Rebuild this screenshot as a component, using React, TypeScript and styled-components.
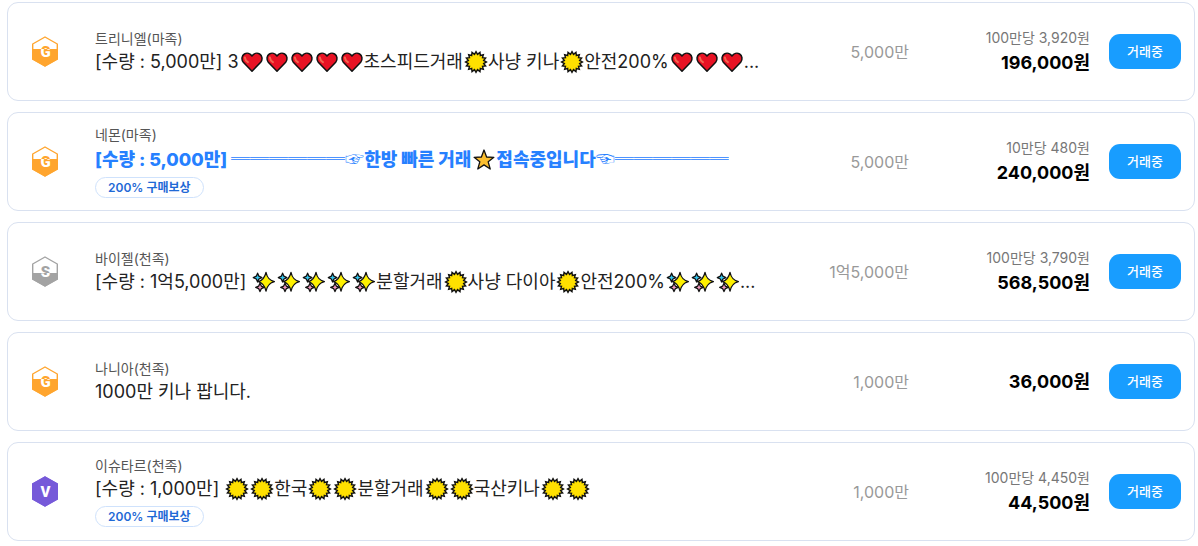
import React from "react";
import styled, { createGlobalStyle } from "styled-components";

const GlobalStyle = createGlobalStyle`
  *, *::before, *::after { box-sizing: border-box; }
  body {
    margin: 0;
    background: #fff;
    color: #222;
    font-family: Inter, "Noto Sans CJK KR", sans-serif;
  }
`;

const List = styled.ul`
  list-style: none;
  margin: 0;
  padding: 2px 3px 5px 7px;
  display: flex;
  flex-direction: column;
  gap: 11px;
`;

const Card = styled.li`
  display: flex;
  align-items: center;
  min-height: 99px;
  padding: 0 13px 0 24px;
  border: 1px solid #d9e1f0;
  border-radius: 11px;
  background: #fff;
`;

const GradeIcon = styled.svg`
  flex: none;
  width: 26px;
  height: 31px;
  margin-right: 37px;
`;

const Info = styled.div`
  flex: 1;
  min-width: 0;
  display: flex;
  flex-direction: column;
  align-items: flex-start;
`;

const Server = styled.span`
  font-size: 14px;
  line-height: 20px;
  color: #555;
`;

const Title = styled.a<{ $premium?: boolean }>`
  max-width: 100%;
  margin: -2px 0;
  padding: 2px 0;
  overflow: hidden;
  white-space: nowrap;
  text-overflow: ellipsis;
  text-decoration: none;
  font-size: 18px;
  line-height: 26px;
  font-weight: ${(p) => (p.$premium ? 800 : 400)};
  color: ${(p) => (p.$premium ? "#2680ff" : "#222")};
`;

const Rule = styled.span`
  font-family: "Noto Sans CJK KR", sans-serif;
  font-size: 19px;
  font-weight: 400;
`;

const EmojiSvg = styled.svg`
  display: inline-block;
  width: 25px;
  height: 24px;
  vertical-align: -6px;
`;

const Reward = styled.span`
  margin-top: 4px;
  padding: 0 12px;
  border: 1px solid #cfe2fc;
  border-radius: 11px;
  font-size: 12px;
  line-height: 19px;
  font-weight: 600;
  color: #1f69d6;
`;

const Quantity = styled.span`
  flex: none;
  width: 120px;
  text-align: right;
  font-size: 16px;
  line-height: 24px;
  color: #999;
`;

const Price = styled.div`
  flex: none;
  width: 181px;
  display: flex;
  flex-direction: column;
  align-items: flex-end;
`;

const UnitPrice = styled.span`
  font-size: 14px;
  line-height: 22px;
  color: #777;
`;

const Total = styled.strong`
  font-size: 18px;
  line-height: 28px;
  font-weight: 700;
  color: #000;
`;

const TradeButton = styled.button`
  flex: none;
  width: 72px;
  height: 35px;
  margin-left: 19px;
  padding: 0 0 2px;
  border: 0;
  border-radius: 11px;
  background: #189dff;
  color: #fff;
  font-family: inherit;
  font-size: 13px;
  font-weight: 500;
  cursor: pointer;
`;

const SUN_POINTS = Array.from({ length: 32 }, (_, i) => {
  const angle = (i * Math.PI) / 16;
  const r = i % 2 ? 7.8 : 10.4;
  return `${(13 + r * Math.sin(angle)).toFixed(2)},${(12 - r * Math.cos(angle)).toFixed(2)}`;
}).join(" ");

const EMOJI: Record<string, { label: string; art: React.ReactNode }> = {
  "♥": {
    label: "하트",
    art: (
      <>
        <path
          d="M13 21.2 4.3 12.2C2.1 9.6 2.8 5.6 5.4 4c2.6-1.5 5.8-.7 7.6 2 1.8-2.7 5-3.5 7.6-2 2.6 1.6 3.3 5.6 1.1 8.2Z"
          fill="#e81224"
          stroke="#111"
          strokeWidth="1.5"
          strokeLinejoin="round"
        />
        <path d="M5.9 7.6c.2 2 1.5 3.5 3 4.5" fill="none" stroke="#f4664f" strokeWidth="2" strokeLinecap="round" />
      </>
    ),
  },
  "☀": {
    label: "해",
    art: <polygon points={SUN_POINTS} fill="#ffe000" stroke="#111" strokeWidth="1.4" />,
  },
  "★": {
    label: "별",
    art: (
      <path
        d="m13 2 2.600 7 7.300.3-5.700 4.500 2 7.200-6.200-4.100-6.200 4.100 2-7.200-5.700-4.500 7.300-.3Z"
        fill="#fcbf30"
        stroke="#111"
        strokeWidth="1.3"
        strokeLinejoin="round"
      />
    ),
  },
  "✨": {
    label: "반짝임",
    art: (
      <g stroke="#111" strokeWidth="1.3" strokeLinejoin="round">
        <path d="m6.6 3.2 1.3 3 3 1.4-3 1.4-1.3 3-1.3-3-3-1.4 3-1.4Z" fill="#35c5ee" />
        <path d="m9 13.2 1.3 2.9 3 1.3-3 1.3L9 21.6l-1.3-2.9-3-1.3 3-1.3Z" fill="#f49ac1" />
        <path d="M15 2.4c1.200 5.200 3 7.800 8.400 9.300-5.400 1.500-7.200 4.100-8.400 9.300-1.200-5.200-3-7.800-7.400-9.300C12 10.200 13.800 7.600 15 2.400Z" fill="#fff100" />
      </g>
    ),
  },
};

function Emoji({ char }: { char: string }) {
  const { label, art } = EMOJI[char];
  return (
    <EmojiSvg viewBox="0 0 25 24" role="img" aria-label={label}>
      {art}
    </EmojiSvg>
  );
}

function RichText({ text }: { text: string }) {
  return (
    <>
      {text.split(/([♥☀★✨]|[═☞☜]+)/).map((part, i) => {
        if (EMOJI[part]) return <Emoji key={i} char={part} />;
        if (/^[═☞☜]/.test(part)) return <Rule key={i}>{part}</Rule>;
        return part;
      })}
    </>
  );
}

type GradeName = "G" | "S" | "V";

const GRADES: Record<GradeName, { color: string; split: number }> = {
  G: { color: "#ffa52e", split: 13 },
  S: { color: "#a3a3a3", split: 17 },
  V: { color: "#7659d9", split: 0 },
};

function Grade({ name }: { name: GradeName }) {
  const { color, split } = GRADES[name];
  const id = React.useId();
  return (
    <GradeIcon viewBox="0 0 26 31" role="img" aria-label={`${name} 등급`}>
      <defs>
        <linearGradient id={`${id}t`} gradientUnits="userSpaceOnUse" x1="0" y1="0" x2="0" y2="31">
          <stop offset={split / 31} stopColor={color} />
          <stop offset={split / 31} stopColor="#fff" />
        </linearGradient>
        <clipPath id={`${id}c`}>
          <rect y={split} width="26" height={31 - split} />
        </clipPath>
      </defs>
      <path d="M13 1 25.3 8v15L13 30 .7 23V8Z" fill="#fff" stroke={color} strokeWidth="1.4" strokeLinejoin="round" />
      <path d="M13 .3 26 7.6v15.8L13 30.7 0 23.4V7.6Z" fill={color} clipPath={`url(#${id}c)`} />
      <text
        x="13.5"
        y="20.5"
        textAnchor="middle"
        fontFamily="Roboto, sans-serif"
        fontSize="15"
        fontWeight="900"
        fill={`url(#${id}t)`}
      >
        {name}
      </text>
    </GradeIcon>
  );
}

interface Offer {
  grade: GradeName;
  server: string;
  title: string;
  premium?: boolean;
  reward?: boolean;
  quantity: string;
  unitPrice?: string;
  total: string;
}

const OFFERS: Offer[] = [
  {
    grade: "G",
    server: "트리니엘(마족)",
    title: "[수량 : 5,000만] 3♥♥♥♥♥초스피드거래☀사냥 키나☀안전200%♥♥♥...",
    quantity: "5,000만",
    unitPrice: "100만당 3,920원",
    total: "196,000원",
  },
  {
    grade: "G",
    server: "네몬(마족)",
    title: "[수량 : 5,000만] ══════☞한방 빠른 거래★접속중입니다☜══════",
    premium: true,
    reward: true,
    quantity: "5,000만",
    unitPrice: "10만당 480원",
    total: "240,000원",
  },
  {
    grade: "S",
    server: "바이젤(천족)",
    title: "[수량 : 1억5,000만] ✨✨✨✨✨분할거래☀사냥 다이아☀안전200%✨✨✨...",
    quantity: "1억5,000만",
    unitPrice: "100만당 3,790원",
    total: "568,500원",
  },
  {
    grade: "G",
    server: "나니아(천족)",
    title: "1000만 키나 팝니다.",
    quantity: "1,000만",
    total: "36,000원",
  },
  {
    grade: "V",
    server: "이슈타르(천족)",
    title: "[수량 : 1,000만] ☀☀한국☀☀분할거래☀☀국산키나☀☀",
    reward: true,
    quantity: "1,000만",
    unitPrice: "100만당 4,450원",
    total: "44,500원",
  },
];

export default function App() {
  return (
    <>
      <GlobalStyle />
      <List>
        {OFFERS.map((offer) => (
          <Card key={offer.server}>
            <Grade name={offer.grade} />
            <Info>
              <Server>{offer.server}</Server>
              <Title href="#" $premium={offer.premium}>
                <RichText text={offer.title} />
              </Title>
              {offer.reward && <Reward>200% 구매보상</Reward>}
            </Info>
            <Quantity>{offer.quantity}</Quantity>
            <Price>
              {offer.unitPrice && <UnitPrice>{offer.unitPrice}</UnitPrice>}
              <Total>{offer.total}</Total>
            </Price>
            <TradeButton type="button">거래중</TradeButton>
          </Card>
        ))}
      </List>
    </>
  );
}
